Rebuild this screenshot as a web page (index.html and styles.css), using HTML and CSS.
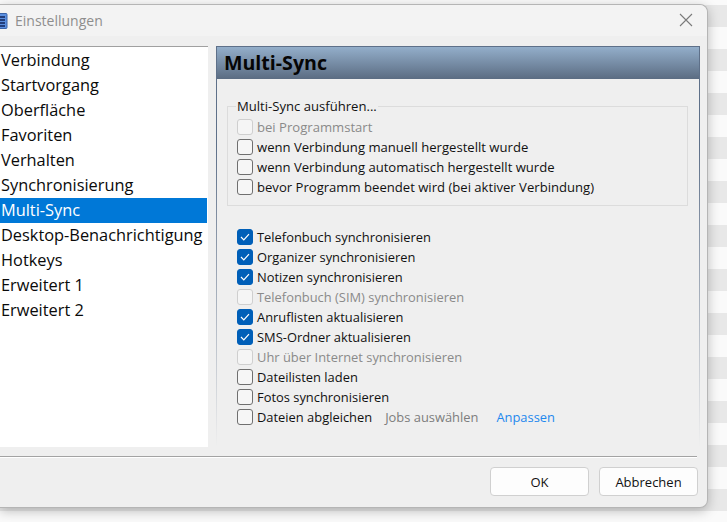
FILE: index.html
```html
<!DOCTYPE html>
<html lang="de">
<head>
<meta charset="utf-8">
<title>Einstellungen</title>
<link rel="stylesheet" href="styles.css">
</head>
<body>
<div class="window">
  <header class="titlebar">
    <svg class="appicon" width="8" height="16" viewBox="0 0 8 16"><rect x="-6" y="0.5" width="13" height="15" rx="1" fill="#5b8fe0" stroke="#3a63a8"/><path d="M0 4h5M0 7h5M0 10h5M0 13h5" stroke="#12245a" stroke-width="1.4"/></svg>
    <span class="title">Einstellungen</span>
    <svg class="close" width="14" height="14" viewBox="0 0 14 14"><path d="M1 1l12 12M13 1L1 13" stroke="#7a7a7a" stroke-width="1.1" fill="none"/></svg>
  </header>
  <div class="content">
    <ul class="nav">
      <li>Verbindung</li>
      <li>Startvorgang</li>
      <li>Oberfläche</li>
      <li>Favoriten</li>
      <li>Verhalten</li>
      <li>Synchronisierung</li>
      <li class="active">Multi-Sync</li>
      <li>Desktop-Benachrichtigung</li>
      <li>Hotkeys</li>
      <li>Erweitert 1</li>
      <li>Erweitert 2</li>
    </ul>
    <section class="panel">
      <h1 class="panel-head">Multi-Sync</h1>
      <div class="panel-body">
        <fieldset class="group">
          <legend>Multi-Sync ausführen...</legend>
          <label class="row off"><span class="box"></span>bei Programmstart</label>
          <label class="row"><span class="box"></span>wenn Verbindung manuell hergestellt wurde</label>
          <label class="row"><span class="box"></span>wenn Verbindung automatisch hergestellt wurde</label>
          <label class="row"><span class="box"></span>bevor Programm beendet wird (bei aktiver Verbindung)</label>
        </fieldset>
        <div class="list">
          <label class="row"><span class="box on"><svg width="10" height="8" viewBox="0 0 10 8"><path d="M1 4l2.8 2.8L9 1.2" stroke="#fff" stroke-width="1.2" fill="none"/></svg></span>Telefonbuch synchronisieren</label>
          <label class="row"><span class="box on"><svg width="10" height="8" viewBox="0 0 10 8"><path d="M1 4l2.8 2.8L9 1.2" stroke="#fff" stroke-width="1.2" fill="none"/></svg></span>Organizer synchronisieren</label>
          <label class="row"><span class="box on"><svg width="10" height="8" viewBox="0 0 10 8"><path d="M1 4l2.8 2.8L9 1.2" stroke="#fff" stroke-width="1.2" fill="none"/></svg></span>Notizen synchronisieren</label>
          <label class="row off"><span class="box"></span>Telefonbuch (SIM) synchronisieren</label>
          <label class="row"><span class="box on"><svg width="10" height="8" viewBox="0 0 10 8"><path d="M1 4l2.8 2.8L9 1.2" stroke="#fff" stroke-width="1.2" fill="none"/></svg></span>Anruflisten aktualisieren</label>
          <label class="row"><span class="box on"><svg width="10" height="8" viewBox="0 0 10 8"><path d="M1 4l2.8 2.8L9 1.2" stroke="#fff" stroke-width="1.2" fill="none"/></svg></span>SMS-Ordner aktualisieren</label>
          <label class="row off"><span class="box"></span>Uhr über Internet synchronisieren</label>
          <label class="row"><span class="box"></span>Dateilisten laden</label>
          <label class="row"><span class="box"></span>Fotos synchronisieren</label>
          <div class="row"><span class="box"></span>Dateien abgleichen<span class="jobs">Jobs auswählen</span><a class="link">Anpassen</a></div>
        </div>
      </div>
    </section>
  </div>
  <footer class="footer">
    <button class="btn">OK</button>
    <button class="btn cancel">Abbrechen</button>
  </footer>
</div>
</body>
</html>
```
FILE: styles.css
```css
* { box-sizing: border-box; }
html, body { margin: 0; height: 522px; overflow: hidden; }
body {
  width: 727px;
  font-family: "Open Sans", "Noto Sans", sans-serif;
  background: repeating-linear-gradient(#e8e8e8 0 22px, #fafafa 22px 44px) 0 5px;
  padding-top: 4px;
}
.window {
  width: 708px;
  height: 504px;
  background: #efefef;
  border: 1px solid #b5b5b5;
  border-left: 0;
  border-radius: 0 8px 8px 0;
  box-shadow: 0 3px 12px rgba(0,0,0,.25);
  display: flex;
  flex-direction: column;
}
.titlebar {
  height: 31px;
  background: #f3f3f3;
  border-radius: 0 8px 0 0;
  display: flex;
  align-items: center;
  color: #8e8e8e;
  font-size: 14px;
  flex: none;
}
.appicon { margin-right: 7px; }
.title { flex: 1; }
.close { margin: 0 14px 1px 0; }
.content { flex: none; height: 420px; display: flex; padding-top: 10px; }
.nav {
  list-style: none;
  margin: 0;
  padding: 0;
  width: 208px;
  height: 401px;
  background: #fff;
  border-top: 1px solid #a0a0a0;
  font-size: 16.35px;
  color: #0a0a0a;
  flex: none;
}
.nav li { height: 25px; line-height: 25px; padding-left: 1px; white-space: nowrap; }
.nav li:first-child { margin-top: 1px; }
.nav .active { background: #0078d7; color: #fff; width: 207px; }
.panel {
  margin-left: 8px;
  width: 484px;
  height: 400px;
  border-style: solid;
  border-width: 0 1px;
  border-image: linear-gradient(#5e7089 0%, #5e7089 25%, rgba(94,112,137,0) 100%) 1;
  display: flex;
  flex-direction: column;
}
.panel-head {
  margin: 0;
  height: 33px;
  border-top: 1px solid #5e7089;
  background: linear-gradient(#93aeca, #5b6c82);
  color: #050505;
  font-size: 19.6px;
  font-weight: 700;
  line-height: 31px;
  padding-left: 7px;
}
.panel-body { padding: 20px 11px 0 10px; font-size: 12.9px; }
.group {
  margin: 0;
  padding: 4px 0 0 9px;
  border: 1px solid #dcdcdc;
  height: 107px;
  font-size: 13.1px;
}
.group legend { padding: 0 1px; margin-left: -1px; color: #111; line-height: 14px; }
.list { margin-top: 21px; margin-left: 10px; }
.row { display: flex; align-items: center; height: 20px; color: #111; white-space: nowrap; }
.row.off { color: #8a8a8a; }
.box {
  width: 16px;
  height: 16px;
  border: 1px solid #6f6f6f;
  border-radius: 3px;
  background: #f6f6f6;
  margin-right: 4px;
  flex: none;
  display: flex;
  align-items: center;
  justify-content: center;
}
.off .box { border-color: #cfcfcf; background: #f5f5f5; }
.box.on { background: #005fb8; border-color: #005fb8; }
.jobs { color: #7d7d7d; margin-left: 13px; }
.link { color: #1e88ee; margin-left: 18px; }
.footer {
  flex: none;
  border-top: 1px solid #a3a3a3;
  box-shadow: inset 0 1px 0 #fff;
  width: 697px;
  padding-top: 10px;
  display: flex;
  justify-content: flex-end;
  gap: 10px;
}
.btn {
  width: 99px;
  height: 29px;
  background: #fdfdfd;
  border: 1px solid #d0d0d0;
  border-radius: 4px;
  font: 13px "Open Sans", "Noto Sans", sans-serif;
  color: #111;
  padding: 0;
}
.cancel { margin-right: -1px; }
```
